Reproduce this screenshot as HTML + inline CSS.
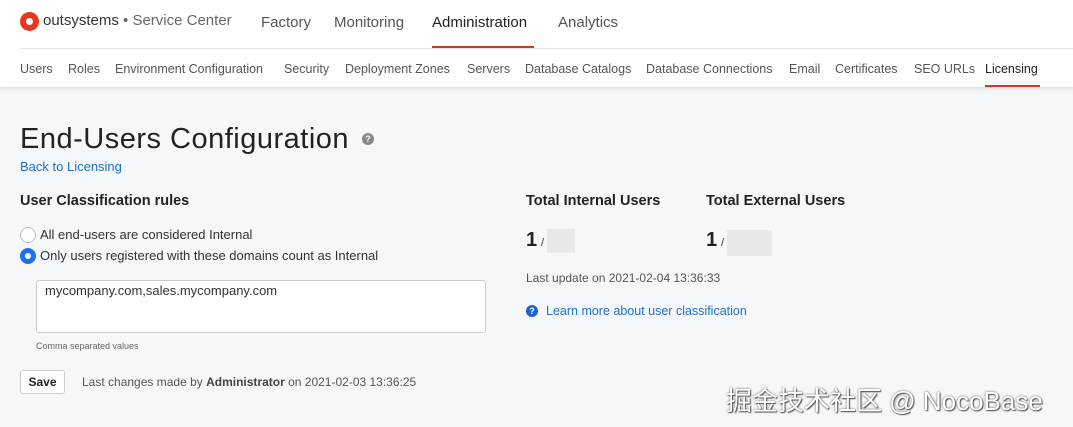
<!DOCTYPE html>
<html><head><meta charset="utf-8"><style>
body{margin:0;width:1073px;height:427px;background:#f6f7f9;font-family:"Liberation Sans","DejaVu Sans",sans-serif;position:relative;overflow:hidden;color:#333}
.a{position:absolute;white-space:nowrap}
.hdr{position:absolute;left:0;top:0;width:1073px;height:87px;background:#fff;box-shadow:0 2px 3px rgba(0,0,0,.1)}
.top{font-size:15px;color:#555;top:14px}
.sub{font-size:12.5px;color:#555;top:62px}
</style></head><body>
<div class="hdr">
<div class="a" style="left:20px;top:12px;width:19px;height:19px;border-radius:50%;background:#e8361f"></div>
<div class="a" style="left:26px;top:18px;width:7px;height:7px;border-radius:50%;background:#fff"></div>
<div class="a" style="left:43px;top:12px;font-size:15px;color:#333">outsystems <span style="color:#666">• Service Center</span></div>
<div class="a top" style="left:261px">Factory</div>
<div class="a top" style="left:334px">Monitoring</div>
<div class="a top" style="left:432px;color:#222">Administration</div>
<div class="a" style="left:432px;top:46px;width:102px;height:2px;background:#d0391f"></div>
<div class="a top" style="left:558px">Analytics</div>
<div class="a" style="left:20px;top:48px;width:1053px;height:1px;background:#e3e3e3"></div>
<div class="a sub" style="left:20px">Users</div>
<div class="a sub" style="left:68px">Roles</div>
<div class="a sub" style="left:115px">Environment Configuration</div>
<div class="a sub" style="left:284px">Security</div>
<div class="a sub" style="left:345px">Deployment Zones</div>
<div class="a sub" style="left:467px">Servers</div>
<div class="a sub" style="left:525px">Database Catalogs</div>
<div class="a sub" style="left:646px">Database Connections</div>
<div class="a sub" style="left:789px">Email</div>
<div class="a sub" style="left:835px">Certificates</div>
<div class="a sub" style="left:914px">SEO URLs</div>
<div class="a sub" style="left:985px;color:#222">Licensing</div>
<div class="a" style="left:985px;top:85px;width:55px;height:2px;background:#d0391f"></div>
</div>
<div class="a" style="left:20px;top:123px;font-size:29px;color:#222;letter-spacing:0.5px">End-Users Configuration</div>
<div class="a" style="left:362px;top:133px;width:12px;height:12px;border-radius:50%;background:#888;color:#fff;font-size:9px;text-align:center;line-height:12px;font-weight:bold">?</div>
<div class="a" style="left:20px;top:159px;font-size:13px;color:#1e6fcf">Back to Licensing</div>
<div class="a" style="left:20px;top:193px;font-size:14.5px;font-weight:bold;color:#222">User Classification rules</div>
<div class="a" style="left:20px;top:227px;width:14px;height:14px;border-radius:50%;border:1px solid #bbb;background:#fff"></div>
<div class="a" style="left:40px;top:227px;font-size:13px">All end-users are considered Internal</div>
<div class="a" style="left:20px;top:248px;width:16px;height:16px;border-radius:50%;background:#1a73e8"></div>
<div class="a" style="left:25px;top:253px;width:6px;height:6px;border-radius:50%;background:#fff"></div>
<div class="a" style="left:40px;top:248px;font-size:13px">Only users registered with these domains count as Internal</div>
<div class="a" style="left:36px;top:280px;width:448px;height:51px;background:#fff;border:1px solid #ccc;border-radius:3px"></div>
<div class="a" style="left:45px;top:283px;font-size:13px">mycompany.com,sales.mycompany.com</div>
<div class="a" style="left:36px;top:341px;font-size:9px;color:#666">Comma separated values</div>
<div class="a" style="left:20px;top:370px;width:43px;height:22px;background:#fff;border:1px solid #ccc;border-radius:3px;font-size:12px;font-weight:bold;text-align:center;line-height:22px;color:#222">Save</div>
<div class="a" style="left:82px;top:375px;font-size:12px;color:#555">Last changes made by <b style="color:#444">Administrator</b> on 2021-02-03 13:36:25</div>
<div class="a" style="left:526px;top:193px;font-size:14.5px;font-weight:bold;color:#222">Total Internal Users</div>
<div class="a" style="left:706px;top:193px;font-size:14.5px;font-weight:bold;color:#222">Total External Users</div>
<div class="a" style="left:526px;top:229px;font-size:20px;font-weight:bold;color:#222">1</div>
<div class="a" style="left:541px;top:237px;font-size:11px;color:#333">/</div>
<div class="a" style="left:547px;top:229px;width:28px;height:24px;background:#e8e8ea"></div>
<div class="a" style="left:706px;top:229px;font-size:20px;font-weight:bold;color:#222">1</div>
<div class="a" style="left:721px;top:237px;font-size:11px;color:#333">/</div>
<div class="a" style="left:727px;top:230px;width:45px;height:26px;background:#e8e8ea"></div>
<div class="a" style="left:526px;top:271px;font-size:12px;color:#555">Last update on 2021-02-04 13:36:33</div>
<div class="a" style="left:526px;top:305px;width:12px;height:12px;border-radius:50%;background:#1a62d0;color:#fff;font-size:9px;text-align:center;line-height:12px;font-weight:bold">?</div>
<div class="a" style="left:546px;top:304px;font-size:12.5px;color:#1e6fcf">Learn more about user classification</div>
<div class="a" style="left:726px;top:381px;font-size:26px;color:#fff;text-shadow:0 0 2px #555,1px 1px 1px #555;font-family:'Liberation Sans','Noto Sans CJK SC',sans-serif">掘金技术社区 @ NocoBase</div>
</body></html>
